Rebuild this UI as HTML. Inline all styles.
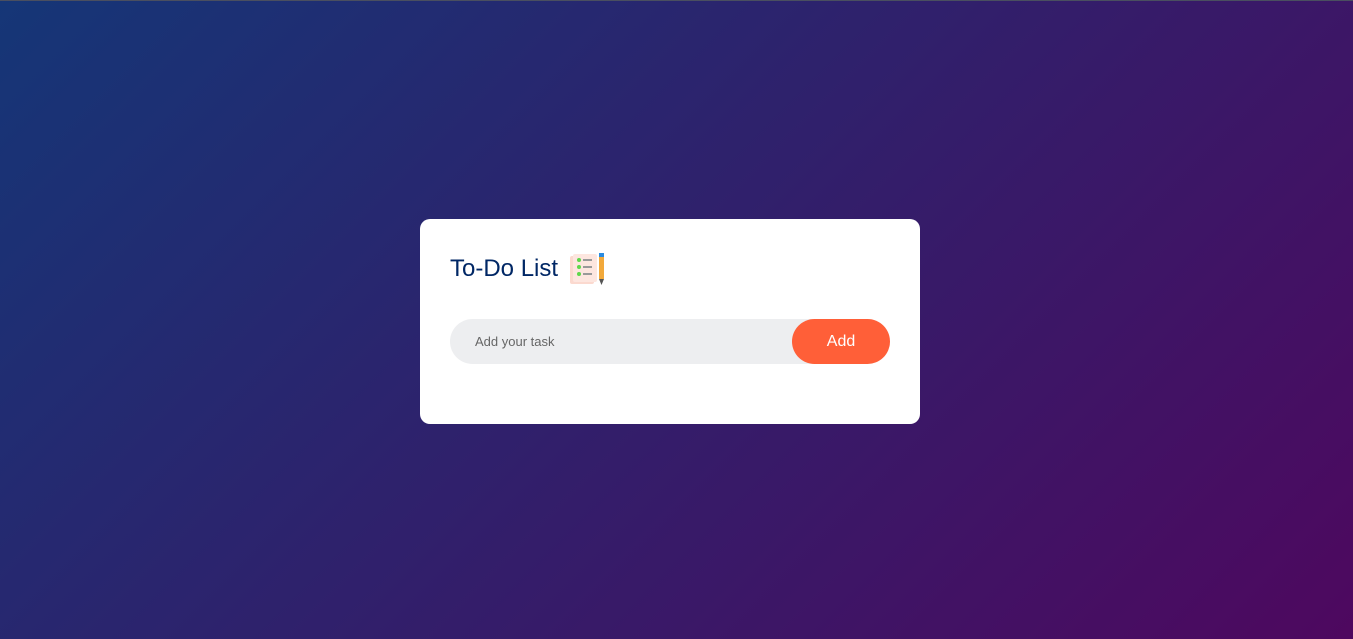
<!DOCTYPE html>
<html><head><meta charset="utf-8"><style>
html,body{margin:0;padding:0;width:1353px;height:639px;overflow:hidden}
body{background:linear-gradient(135deg,#153677,#4e085f);font-family:"Liberation Sans",sans-serif;position:relative}
.line{position:absolute;left:0;top:0;width:100%;height:1px;background:#4a4f60}
.card{position:absolute;left:420px;top:219px;width:500px;height:205px;background:#fff;border-radius:10px}
h2{position:absolute;left:30px;top:33px;margin:0;font-weight:normal;font-size:24px;color:#002765;display:flex;align-items:center}
h2 svg{margin-left:10px}
.row{position:absolute;left:30px;top:100px;width:440px;height:45px;background:#edeef0;border-radius:30px}
.row span{position:absolute;left:25px;top:15px;font-size:13px;color:#666}
.btn{position:absolute;right:0;top:0;width:98px;height:45px;border-radius:40px;background:#ff5f38;color:#fff;font-size:16px;text-align:center;line-height:45px}
</style></head><body>
<div class="line"></div>
<div class="card">
<h2>To-Do List
<svg width="38" height="34" viewBox="0 0 38 34">
<rect x="2" y="4" width="24" height="28" rx="2" fill="#fbd9cf"/>
<rect x="5" y="2" width="24" height="28" rx="2" fill="#fde6df"/>
<circle cx="11" cy="8" r="2" fill="#5ed84b"/><rect x="15" y="7" width="9" height="2" fill="#999"/>
<circle cx="11" cy="15" r="2" fill="#5ed84b"/><rect x="15" y="14" width="9" height="2" fill="#999"/>
<circle cx="11" cy="22" r="2" fill="#5ed84b"/><rect x="15" y="21" width="9" height="2" fill="#999"/>
<rect x="31" y="1" width="5" height="4" fill="#2a8be0"/>
<rect x="31" y="5" width="5" height="22" fill="#f2a93b"/>
<polygon points="31,27 36,27 33.5,33" fill="#555"/>
</svg></h2>
<div class="row"><span>Add your task</span><div class="btn">Add</div></div>
</div>
</body></html>
